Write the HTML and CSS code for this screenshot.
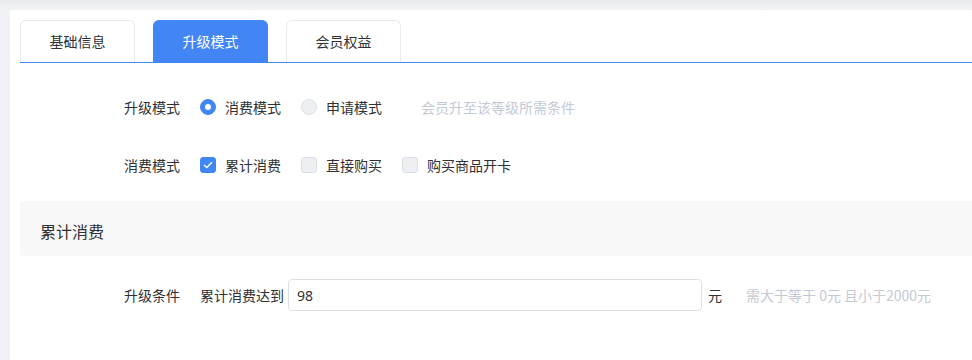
FILE: index.html
```html
<!DOCTYPE html>
<html lang="zh-CN">
<head>
  <meta charset="UTF-8" />
  <meta name="viewport" content="width=device-width, initial-scale=1.0"/>
  <title>会员等级设置</title>
  <link rel="stylesheet" href="styles.css">
</head>
<body>
  <div class="page">
    <div class="card">
      <!-- Tabs -->
      <div class="tabs">
        <div class="tab">基础信息</div>
        <div class="tab active">升级模式</div>
        <div class="tab">会员权益</div>
      </div>

      <div class="form">
        <div class="form-row">
          <label class="form-label">升级模式</label>
          <div class="form-control">
            <span class="radio checked"></span><span class="opt-text">消费模式</span>
            <span class="radio"></span><span class="opt-text">申请模式</span>
            <span class="hint hint-gap">会员升至该等级所需条件</span>
          </div>
        </div>

        <div class="form-row">
          <label class="form-label">消费模式</label>
          <div class="form-control">
            <span class="checkbox checked">
              <svg width="10" height="8" viewBox="0 0 10 8"><path d="M1 4l2.8 2.6L9 1.2" fill="none" stroke="#fff" stroke-width="1.4"/></svg>
            </span><span class="opt-text">累计消费</span>
            <span class="checkbox"></span><span class="opt-text">直接购买</span>
            <span class="checkbox"></span><span class="opt-text">购买商品开卡</span>
          </div>
        </div>
      </div>

      <div class="section-title">累计消费</div>

      <div class="form">
        <div class="form-row">
          <label class="form-label">升级条件</label>
          <div class="form-control">
            <span class="prefix">累计消费达到</span>
            <input class="text-input" type="text" value="98">
            <span class="unit">元</span>
            <span class="hint">需大于等于 0元 且小于2000元</span>
          </div>
        </div>
      </div>
    </div>
  </div>
</body>
</html>
```

FILE: styles.css
```css
/* Reset and base styles */
* {
  box-sizing: border-box;
  margin: 0;
  padding: 0;
}

body {
  font-family: "Noto Sans CJK SC", "Noto Sans", sans-serif;
  font-size: 14px;
  color: #303133;
  background-color: #f0f2f5;
  overflow: hidden;
}

.page {
  height: 360px;
  padding: 10px 0 0 10px;
  background: linear-gradient(to bottom, #e9ecef 0, #f0f2f5 10px);
}

.card {
  background-color: #ffffff;
  height: 100%;
  padding: 10px 0 0 10px;
  border-top-left-radius: 2px;
}

/* Tabs */
.tabs {
  display: flex;
  gap: 18px;
  border-bottom: 1px solid #4285f4;
  height: 43px;
}

.tab {
  width: 115px;
  height: 42px;
  line-height: 40px;
  text-align: center;
  border: 1px solid #e8eaee;
  border-bottom: none;
  border-radius: 6px 6px 0 0;
  color: #303133;
}

.tab.active {
  background-color: #4285f4;
  border-color: #4285f4;
  color: #fff;
}

/* Form */
.form {
  padding-top: 28px;
}

.form-row {
  display: flex;
  align-items: center;
  height: 32px;
  margin-bottom: 26px;
}

.form-label {
  width: 180px;
  padding-right: 20px;
  text-align: right;
  color: #303133;
}

.form-control {
  display: flex;
  align-items: center;
}

.radio {
  width: 16px;
  height: 16px;
  border-radius: 50%;
  border: 1px solid #dcdfe6;
  background-color: #edf0f3;
  position: relative;
}

.radio.checked {
  background-color: #4285f4;
  border-color: #4285f4;
}

.radio.checked::after {
  content: "";
  position: absolute;
  width: 6px;
  height: 6px;
  border-radius: 50%;
  background: #fff;
  left: 4px;
  top: 4px;
}

.checkbox {
  width: 16px;
  height: 16px;
  border-radius: 3px;
  border: 1px solid #dcdfe6;
  background-color: #edf0f3;
  display: flex;
  align-items: center;
  justify-content: center;
}

.checkbox.checked {
  background-color: #4285f4;
  border-color: #4285f4;
}

.opt-text {
  margin-left: 9px;
  margin-right: 20px;
}

.hint {
  color: #c4c9d6;
}

.hint-gap {
  margin-left: 19px;
}

/* Section title */
.section-title {
  margin-top: -6px;
  height: 55px;
  padding-top: 6px;
  line-height: 49px;
  padding-left: 20px;
  background-color: #f8f8f8;
  border-radius: 4px 0 0 4px;
  font-size: 16px;
  color: #303133;
}

.form + .section-title + .form {
  padding-top: 23px;
}

.prefix {
  margin-right: 4px;
}

.text-input {
  width: 414px;
  height: 32px;
  border: 1px solid #dcdfe6;
  border-radius: 4px;
  padding: 0 8px;
  font-family: "Noto Sans", sans-serif;
  font-size: 14px;
  color: #303133;
  outline: none;
}

.unit {
  margin-left: 6px;
  margin-right: 24px;
}
```
